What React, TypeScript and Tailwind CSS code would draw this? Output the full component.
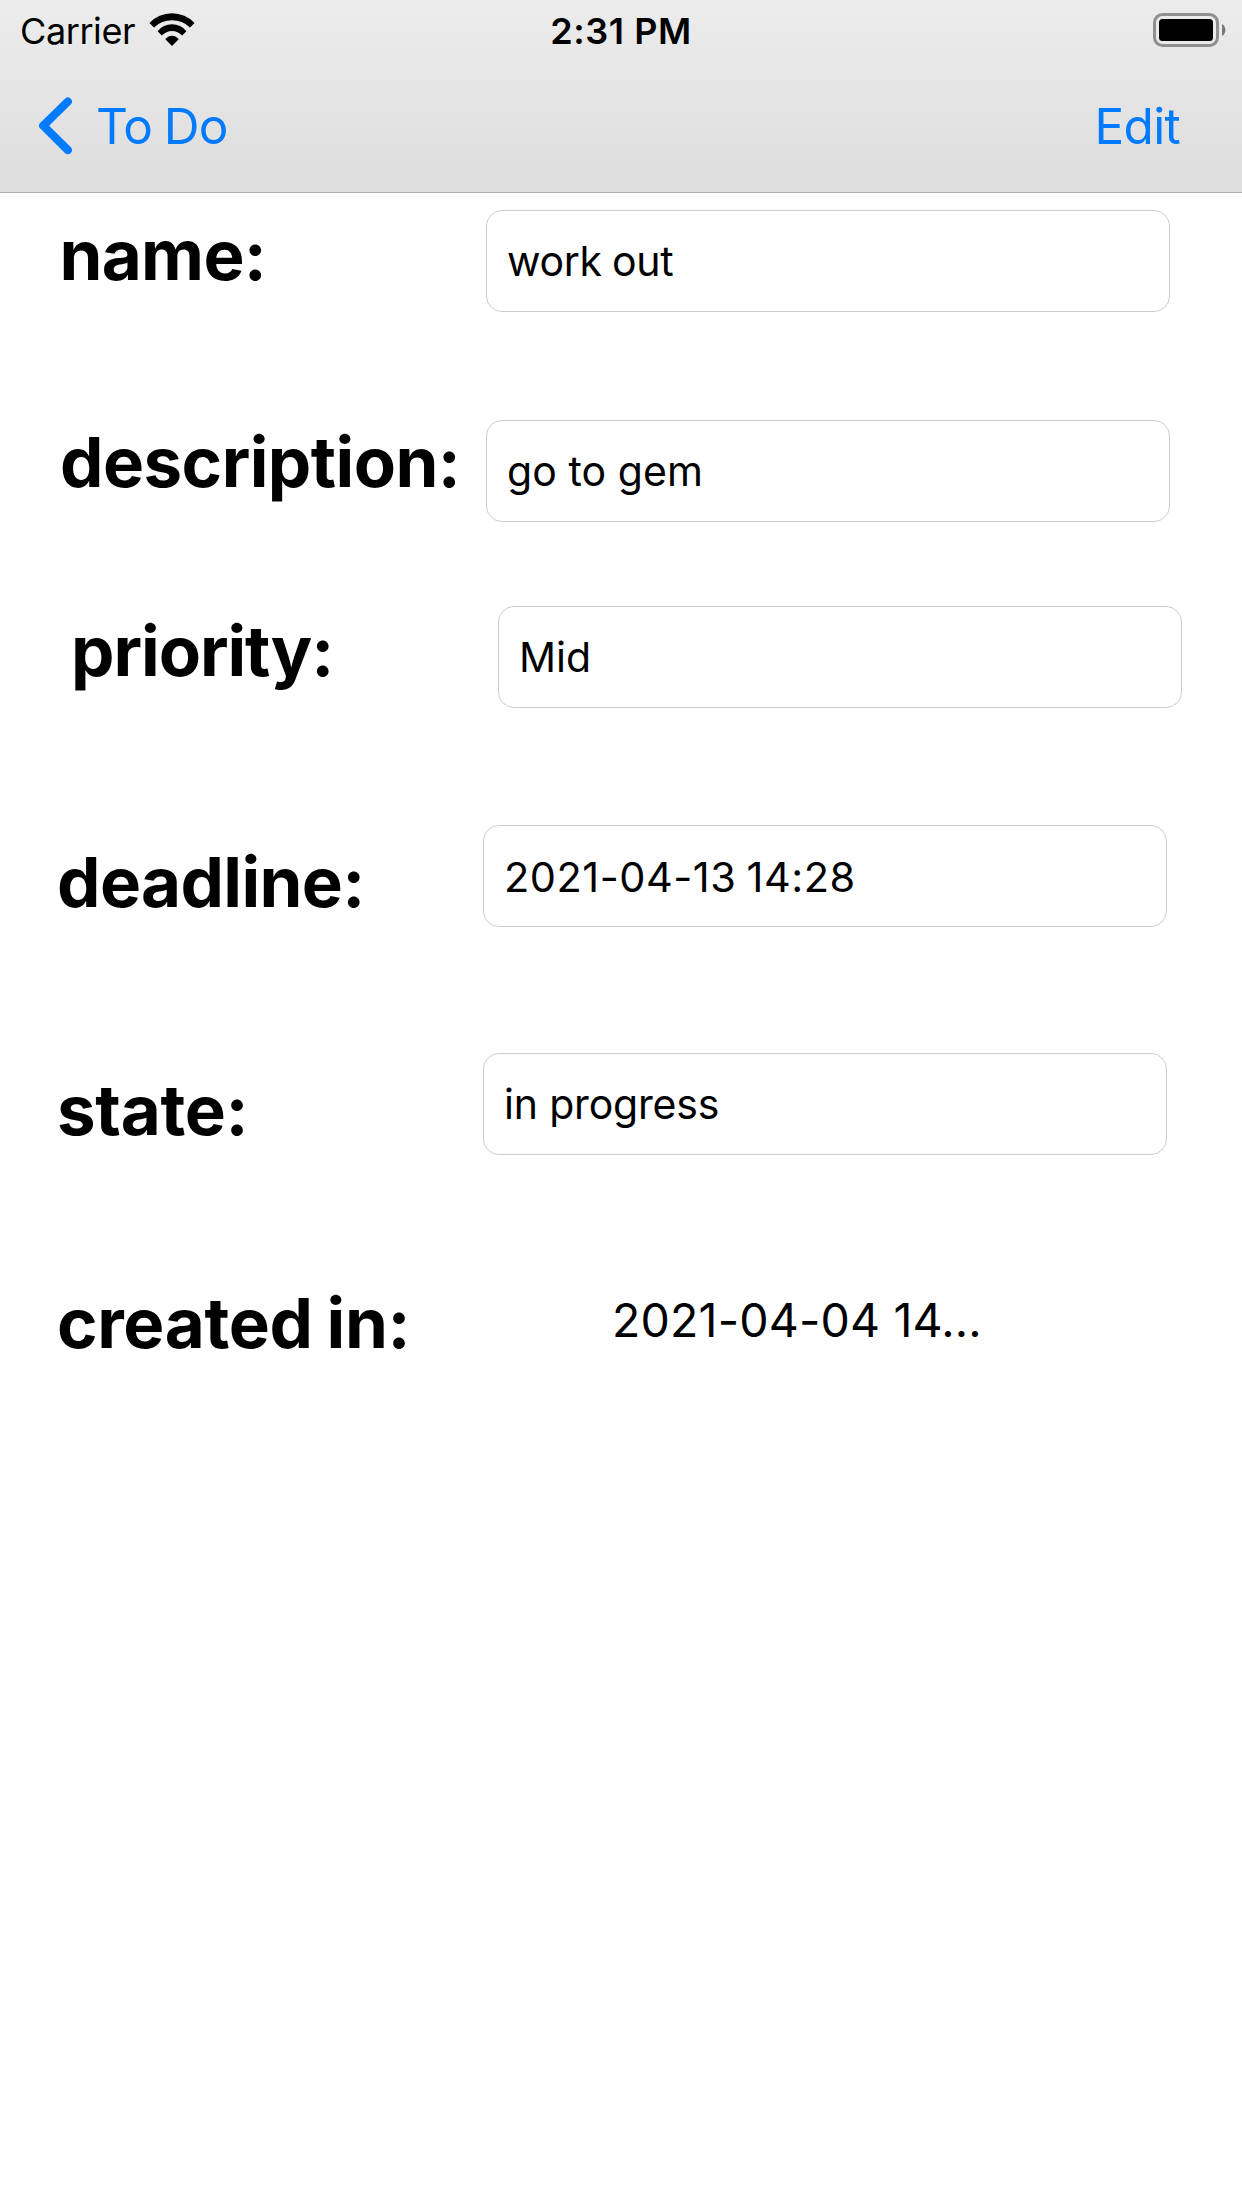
type FieldRow = {
  label: string;
  value: string;
  row: string;
  labelStyle: string;
  valueStyle: string;
};

const rows: FieldRow[] = [
  { label: "name:", value: "work out", row: "mt-[17px] pl-[59.5px] pr-[72px]", labelStyle: "mt-1 tracking-[-0.7px]", valueStyle: "text-[41px] tracking-[-0.3px] [word-spacing:-1px]" },
  { label: "description:", value: "go to gem", row: "mt-[108px] pl-[60px] pr-[72px]", labelStyle: "mt-px tracking-[-0.55px]", valueStyle: "text-[41px] tracking-[0.07px]" },
  { label: "priority:", value: "Mid", row: "mt-[84px] pl-[71px] pr-[60px]", labelStyle: "mt-1 tracking-[-1.05px]", valueStyle: "text-[41px]" },
  { label: "deadline:", value: "2021-04-13 14:28", row: "mt-[117px] pl-[57px] pr-[75px]", labelStyle: "mt-4 tracking-[-0.62px]", valueStyle: "text-[41.5px] tracking-[0.5px] [word-spacing:-2px]" },
  { label: "state:", value: "in progress", row: "mt-[126px] pl-[57px] pr-[75px]", labelStyle: "mt-4 tracking-[-0.3px]", valueStyle: "text-[41px] tracking-[-0.18px]" },
];

function Wifi() {
  return (
    <svg className="ml-[14px] h-[34px] w-[46px]" viewBox="149 13 46 34" fill="#000">
      <path d="M149.4 23 A31 31 0 0 1 194.6 23 L190 27.6 A25.5 25.5 0 0 0 154 27.6 Z" />
      <path d="M157.6 31.2 A18.3 18.3 0 0 1 186.4 31.2 L182.2 35.5 A14 14 0 0 0 161.8 35.5 Z" />
      <path d="M165.3 39.3 A8 8 0 0 1 178.7 39.3 L172 46 Z" />
    </svg>
  );
}

function Battery() {
  return (
    <svg className="h-[34px] w-[74px]" viewBox="1153 13 74 34">
      <rect x="1154.5" y="14.5" width="63" height="31" rx="8" fill="none" stroke="#8f8f8f" strokeWidth="3" />
      <rect x="1159" y="19" width="54" height="22" rx="3.5" fill="#000" />
      <path d="M1222 24 A7 7 0 0 1 1222 36 Z" fill="#777" />
    </svg>
  );
}

export default function App() {
  return (
    <div className="flex h-[2208px] w-[1242px] flex-col bg-white font-['Inter',sans-serif] text-black">
      <header className="h-[193px] border-b border-[#b0b0b0] bg-linear-to-b from-[#ececec] to-[#dddddd]">
        <div className="grid h-[60px] grid-cols-3 items-center text-[36px] leading-[58px]">
          <div className="flex items-center pl-5">
            <span className="pt-0.5 tracking-[-0.41px]">Carrier</span>
            <Wifi />
          </div>
          <span className="pt-0.5 text-center font-semibold tracking-[0.56px]">2:31 PM</span>
          <div className="flex justify-end pr-[15px]">
            <Battery />
          </div>
        </div>
        <nav className="flex h-[132px] items-center justify-between pr-[62px] pl-[38px] text-[49.5px] text-[#007aff]">
          <button className="flex items-center">
            <svg className="h-[58px] w-[34px]" viewBox="38 97 34 58" fill="none" stroke="currentColor" strokeWidth="8.2" strokeLinecap="round" strokeLinejoin="round">
              <path d="M67.8 101.6 L43.2 125.7 L67.8 150" />
            </svg>
            <span className="ml-[24px] tracking-[-0.8px] [word-spacing:-1.5px]">To Do</span>
          </button>
          <button className="tracking-[-0.7px]">Edit</button>
        </nav>
      </header>
      <main className="flex flex-col">
        {rows.map((r) => (
          <div key={r.label} className={`flex h-[102px] items-start justify-between ${r.row}`}>
            <label className={`text-[69px] leading-[82px] font-bold whitespace-nowrap ${r.labelStyle}`}>{r.label}</label>
            <div className="flex h-[102px] w-[684px] shrink-0 items-center rounded-2xl border border-[#cdcdcd] pt-0.5 pl-5">
              <span className={r.valueStyle}>{r.value}</span>
            </div>
          </div>
        ))}
        <div className="mt-[127px] flex h-[82px] items-start pl-[57px]">
          <span className="w-[555px] text-[69px] leading-[82px] font-bold tracking-[-0.35px] [word-spacing:-2px]">created in:</span>
          <span className="text-[46.5px] leading-[76px] tracking-[0.17px]">2021-04-04 14...</span>
        </div>
      </main>
    </div>
  );
}
